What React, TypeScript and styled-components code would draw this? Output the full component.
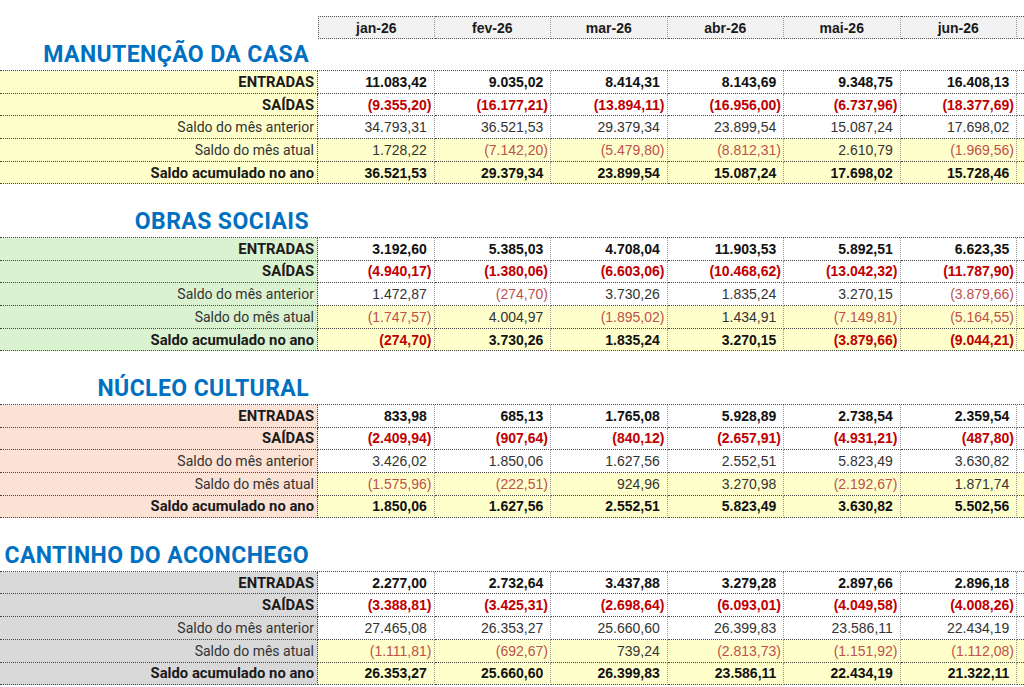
import styled, { createGlobalStyle } from 'styled-components'

const GlobalStyle = createGlobalStyle`
  html, body {
    margin: 0;
    padding: 0;
    background: #ffffff;
    overflow: hidden;
  }
`

const COLS = '318px repeat(7, 116.5px)'
const YELLOW = '#ffffcc'

type Kind = 'bold' | 'plain'

interface Line {
  label: string
  kind: Kind
  values: string[]
}

interface Block {
  title: string
  tint: string
  lines: Line[]
}

// last column is only a sliver at the right edge, so it has no caption
const months = ['jan-26', 'fev-26', 'mar-26', 'abr-26', 'mai-26', 'jun-26', '']

// quick helper so each block reads like the sheet
const mk = (e: string[], s: string[], a: string[], m: string[], t: string[]): Line[] => [
  { label: 'ENTRADAS', kind: 'bold', values: e },
  { label: 'SAÍDAS', kind: 'bold', values: s },
  { label: 'Saldo do mês anterior', kind: 'plain', values: a },
  { label: 'Saldo do mês atual', kind: 'plain', values: m },
  { label: 'Saldo acumulado no ano', kind: 'bold', values: t },
]

const blocks: Block[] = [
  {
    title: 'MANUTENÇÃO DA CASA',
    tint: '#ffffcc',
    lines: mk(
      ['11.083,42', '9.035,02', '8.414,31', '8.143,69', '9.348,75', '16.408,13'],
      ['(9.355,20)', '(16.177,21)', '(13.894,11)', '(16.956,00)', '(6.737,96)', '(18.377,69)'],
      ['34.793,31', '36.521,53', '29.379,34', '23.899,54', '15.087,24', '17.698,02'],
      ['1.728,22', '(7.142,20)', '(5.479,80)', '(8.812,31)', '2.610,79', '(1.969,56)'],
      ['36.521,53', '29.379,34', '23.899,54', '15.087,24', '17.698,02', '15.728,46'],
    ),
  },
  {
    title: 'OBRAS SOCIAIS',
    tint: '#daf2d0',
    lines: mk(
      ['3.192,60', '5.385,03', '4.708,04', '11.903,53', '5.892,51', '6.623,35'],
      ['(4.940,17)', '(1.380,06)', '(6.603,06)', '(10.468,62)', '(13.042,32)', '(11.787,90)'],
      ['1.472,87', '(274,70)', '3.730,26', '1.835,24', '3.270,15', '(3.879,66)'],
      ['(1.747,57)', '4.004,97', '(1.895,02)', '1.434,91', '(7.149,81)', '(5.164,55)'],
      ['(274,70)', '3.730,26', '1.835,24', '3.270,15', '(3.879,66)', '(9.044,21)'],
    ),
  },
  {
    title: 'NÚCLEO CULTURAL',
    tint: '#fbe2d5',
    lines: mk(
      ['833,98', '685,13', '1.765,08', '5.928,89', '2.738,54', '2.359,54'],
      ['(2.409,94)', '(907,64)', '(840,12)', '(2.657,91)', '(4.931,21)', '(487,80)'],
      ['3.426,02', '1.850,06', '1.627,56', '2.552,51', '5.823,49', '3.630,82'],
      ['(1.575,96)', '(222,51)', '924,96', '3.270,98', '(2.192,67)', '1.871,74'],
      ['1.850,06', '1.627,56', '2.552,51', '5.823,49', '3.630,82', '5.502,56'],
    ),
  },
  {
    title: 'CANTINHO DO ACONCHEGO',
    tint: '#d9d9d9',
    lines: mk(
      ['2.277,00', '2.732,64', '3.437,88', '3.279,28', '2.897,66', '2.896,18'],
      ['(3.388,81)', '(3.425,31)', '(2.698,64)', '(6.093,01)', '(4.049,58)', '(4.008,26)'],
      ['27.465,08', '26.353,27', '25.660,60', '26.399,83', '23.586,11', '22.434,19'],
      ['(1.111,81)', '(692,67)', '739,24', '(2.813,73)', '(1.151,92)', '(1.112,08)'],
      ['26.353,27', '25.660,60', '26.399,83', '23.586,11', '22.434,19', '21.322,11'],
    ),
  },
]

const Sheet = styled.div`
  width: 1024px;
  height: 687px;
  overflow: hidden;
  padding-top: 16px;
  box-sizing: border-box;
  background: #ffffff;
`

const HeaderRow = styled.div`
  display: grid;
  grid-template-columns: ${COLS};
  height: 23px;
`

const Corner = styled.div``

const MonthHead = styled.div`
  background: #f2f2f2;
  border-top: 1px dotted #555;
  border-bottom: 1px dotted #555;
  border-right: 1px dotted #999;
  font: bold 14px 'Liberation Sans', Arial, sans-serif;
  color: #1a1a1a;
  display: flex;
  align-items: center;
  justify-content: center;
  box-sizing: border-box;
  &:nth-child(2) {
    border-left: 1px dotted #555;
  }
`

const Section = styled.section<{ $first: boolean }>`
  margin-top: ${(p) => (p.$first ? '0' : '22.7px')};
`

const TitleRow = styled.div<{ $h: number }>`
  display: grid;
  grid-template-columns: ${COLS};
  height: ${(p) => p.$h}px;
`

const Title = styled.h2`
  margin: 0;
  padding: 0 9px 2px 0;
  font: bold 23px Roboto, 'Liberation Sans', sans-serif;
  letter-spacing: 0.4px;
  color: #0070c0;
  display: flex;
  align-items: flex-end;
  justify-content: flex-end;
  white-space: nowrap;
`

const Rows = styled.div`
  border-top: 1px dotted #444;
`

const DataRow = styled.div`
  display: grid;
  grid-template-columns: ${COLS};
  height: 22.7px;
`

const Label = styled.div<{ $bg: string; $bold: boolean }>`
  background: ${(p) => p.$bg};
  border-bottom: 1px dotted #444;
  border-right: 1px dotted #444;
  box-sizing: border-box;
  display: flex;
  align-items: center;
  justify-content: flex-end;
  padding-right: 3px;
  font-family: Roboto, 'Liberation Sans', sans-serif;
  font-weight: ${(p) => (p.$bold ? 700 : 400)};
  font-size: ${(p) => (p.$bold ? '14.8px' : '14px')};
  color: ${(p) => (p.$bold ? '#1a1a1a' : '#333333')};
  white-space: nowrap;
`

const Value = styled.div<{ $bg: string; $bold: boolean; $neg: boolean }>`
  background: ${(p) => p.$bg};
  border-bottom: 1px dotted #444;
  border-right: 1px dotted #9a9a9a;
  box-sizing: border-box;
  display: flex;
  align-items: center;
  justify-content: flex-end;
  padding-right: 2px;
  font: ${(p) => (p.$bold ? 'bold' : 'normal')} 14px 'Liberation Sans', Arial, sans-serif;
  color: ${(p) => (p.$neg ? (p.$bold ? '#c00000' : '#c0504d') : p.$bold ? '#111111' : '#333333')};
  white-space: nowrap;
`

// keeps positives lined up with the closing bracket of negatives
const Pad = styled.span`
  visibility: hidden;
`

const App = () => {
  return (
    <>
      <GlobalStyle />
      <Sheet>
        <HeaderRow>
          <Corner />
          {months.map((m, c) => (
            <MonthHead key={c}>{m}</MonthHead>
          ))}
        </HeaderRow>
        {blocks.map((b, i) => (
          <Section key={b.title} $first={i === 0}>
            <TitleRow $h={i === 0 ? 31 : 29.8}>
              <Title>{b.title}</Title>
            </TitleRow>
            <Rows>
              {b.lines.map((ln, r) => {
                const cellBg = r >= 3 ? YELLOW : '#ffffff'
                return (
                  <DataRow key={ln.label}>
                    <Label $bg={b.tint} $bold={ln.kind === 'bold'}>
                      {ln.label}
                    </Label>
                    {months.map((_, c) => {
                      const v = ln.values[c] ?? ''
                      const neg = v.startsWith('(')
                      return (
                        <Value key={c} $bg={cellBg} $bold={ln.kind === 'bold'} $neg={neg}>
                          {v}
                          {v && !neg && <Pad>)</Pad>}
                        </Value>
                      )
                    })}
                  </DataRow>
                )
              })}
            </Rows>
          </Section>
        ))}
      </Sheet>
    </>
  )
}

export default App
